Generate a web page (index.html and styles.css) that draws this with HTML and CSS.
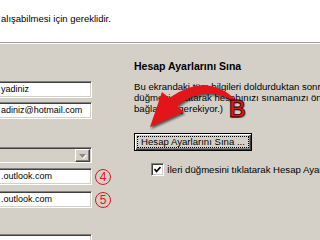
FILE: index.html
```html
<!DOCTYPE html>
<html lang="tr">
<head>
    <meta charset="UTF-8">
    <meta name="viewport" content="width=device-width, initial-scale=1.0">
    <title>Hesap Ayarları</title>
    <link rel="stylesheet" href="styles.css">
</head>
<body>
    <div class="intro">
        <p>alışabilmesi için gereklidir.</p>
    </div>

    <div class="main">
        <div class="fields">
            <div class="field f-name"><span class="box">yadiniz</span></div>
            <div class="field f-mail"><span class="box">adiniz@hotmail.com</span></div>
            <div class="field f-type">
                <span class="box combo">
                    <span class="combo-btn">
                        <svg width="7" height="4" viewBox="0 0 7 4"><polygon points="0,0 7,0 3.5,4" fill="#8a8782"/></svg>
                    </span>
                </span>
            </div>
            <div class="field f-in"><span class="box">.outlook.com</span><span class="mark">4</span></div>
            <div class="field f-out"><span class="box">.outlook.com</span><span class="mark">5</span></div>
            <div class="field f-user"><span class="box"></span></div>
        </div>

        <div class="test">
            <h2>Hesap Ayarlarını Sına</h2>
            <p>Bu ekrandaki tüm bilgileri doldurduktan sonra, aşağıdaki<br>düğmeyi tıklatarak hesabınızı sınamanızı öneririz. (Ağ<br>bağlantısı gerekiyor.)</p>
            <button class="btn-test"><span class="focus">Hesap Ayarlarını Sına ...</span></button>
            <label class="next-test">
                <span class="check">
                    <svg width="7" height="7" viewBox="0 0 7 7"><polyline points="0.5,3 2.5,5.5 6.5,1" fill="none" stroke="#000" stroke-width="1.6"/></svg>
                </span>
                İleri düğmesini tıklatarak Hesap Ayarlarını sına
            </label>
        </div>
    </div>

    <!-- red callout drawn over the dialog -->
    <svg class="callout" width="120" height="55" viewBox="0 0 120 55">
        <path d="M95 19 Q66 -8 29 18 L22 12 L10 47 L44 32 L37 26 Q66 3 95 22 Z" fill="#e3151b"/>
    </svg>
    <span class="callout-letter">B</span>
</body>
</html>
```

FILE: styles.css
```css
/* General */
body {
    margin: 0;
    height: 240px;
    overflow: hidden;
    position: relative;
    background: #d4d0c8;
    font-family: "Liberation Sans", Arial, sans-serif;
    font-size: 9.5px;
    color: #000;
}

/* Header strip */
.intro {
    height: 42px;
    background: #fff;
    border-bottom: 1px solid #a09d98;
    box-shadow: 0 1px 0 #fff;
}

.intro p {
    margin: 0;
    padding: 13px 0 0 1px;
    line-height: 11px;
}

/* Two columns */
.main {
    display: grid;
    grid-template-columns: 134px 1fr;
}

/* Left: fields */
.fields {
    padding-top: 38px;
    display: flex;
    flex-direction: column;
}

.field {
    display: flex;
    align-items: center;
    gap: 3px;
}

.f-mail { margin-top: 4px; }
.f-type { margin-top: 28px; }
.f-in { margin-top: 5px; }
.f-out { margin-top: 6px; }
.f-user { margin-top: 26px; }

.box {
    box-sizing: border-box;
    width: 92px;
    height: 17px;
    padding: 0 2px 0 1px;
    background: #fff;
    border-top: 1px solid #808080;
    border-right: 1px solid #fff;
    border-bottom: 1px solid #fff;
    box-shadow: inset 0 1px 0 #404040, inset -1px -1px 0 #d4d0c8;
    font-size: 9px;
    line-height: 15px;
    white-space: nowrap;
    overflow: hidden;
}

.combo {
    height: 16px;
    padding: 0 1px 0 0;
    background: #d4d0c8;
    display: flex;
    align-items: center;
    justify-content: flex-end;
}

.combo-btn {
    box-sizing: border-box;
    width: 15px;
    height: 13px;
    margin-top: 1px;
    background: #d4d0c8;
    border: 1px solid;
    border-color: #fff #404040 #404040 #fff;
    box-shadow: inset -1px -1px 0 #808080;
    display: flex;
    align-items: center;
    justify-content: center;
}

.combo-btn svg {
    filter: drop-shadow(1px 1px 0 #fff);
}

.mark {
    box-sizing: border-box;
    width: 16px;
    height: 16px;
    border: 1.6px solid #e3151b;
    border-radius: 50%;
    color: #e3151b;
    font-size: 12px;
    line-height: 1;
    display: flex;
    align-items: center;
    justify-content: center;
}

/* Right: test settings */
.test {
    padding-top: 17px;
    font-size: 9.6px;
}

.test h2 {
    margin: 0;
    font-size: 10.5px;
    line-height: 12px;
    font-weight: bold;
}

.test p {
    margin: 9px 0 0;
    line-height: 11px;
    white-space: nowrap;
}

.btn-test {
    display: block;
    box-sizing: border-box;
    width: 118px;
    height: 18px;
    margin-top: 19px;
    padding: 2px;
    border: 1px solid #000;
    background: #d4d0c8;
    box-shadow: inset 1px 1px 0 #fff, inset -1px -1px 0 #404040, inset -2px -2px 0 #808080;
    font: inherit;
    color: #000;
}

.btn-test .focus {
    display: block;
    box-sizing: border-box;
    height: 12px;
    border: 1px dotted #000;
    line-height: 10px;
    text-align: center;
    white-space: nowrap;
}

.next-test {
    margin: 12px 0 0 17px;
    display: flex;
    align-items: center;
    gap: 3px;
    line-height: 11px;
    white-space: nowrap;
}

.check {
    box-sizing: border-box;
    flex: none;
    width: 13px;
    height: 13px;
    background: #fff;
    border: 1px solid;
    border-color: #808080 #fff #fff #808080;
    box-shadow: inset 1px 1px 0 #404040, inset -1px -1px 0 #d4d0c8;
    display: flex;
    align-items: center;
    justify-content: center;
}

/* Callout */
.callout {
    position: absolute;
    left: 140px;
    top: 80px;
    filter: drop-shadow(1px 2px 1px rgba(0, 0, 0, 0.6));
}

.callout-letter {
    position: absolute;
    left: 229px;
    top: 98px;
    font-size: 23px;
    line-height: 23px;
    font-weight: bold;
    color: #e3151b;
    -webkit-text-stroke: 0.8px #1a0000;
    text-shadow: 1px 1px 1px rgba(0, 0, 0, 0.45);
}
```
